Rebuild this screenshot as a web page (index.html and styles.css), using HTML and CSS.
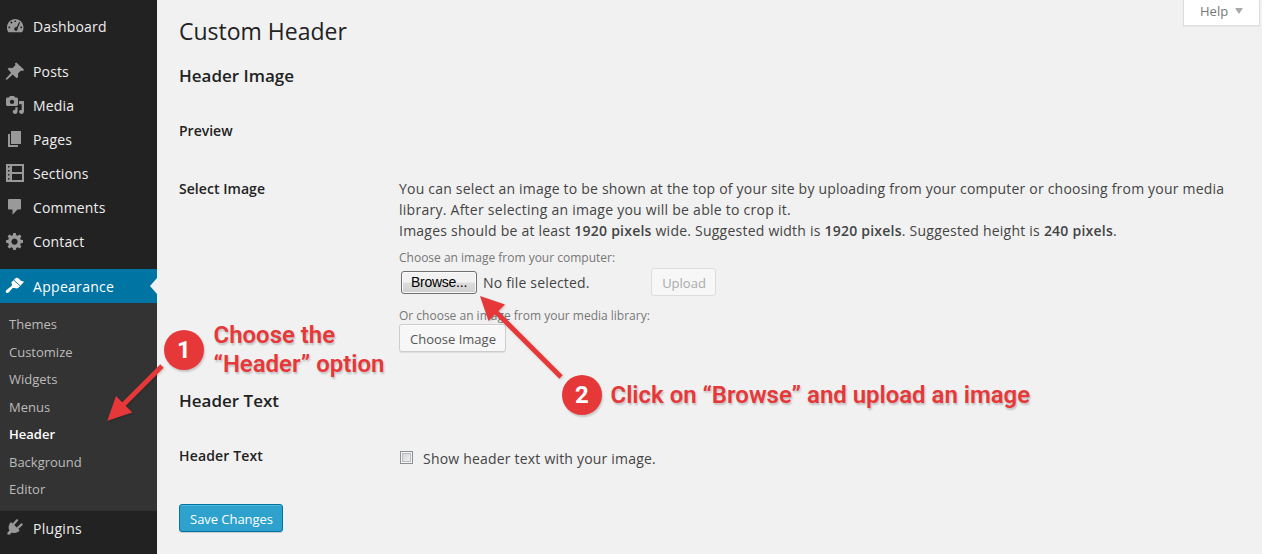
FILE: index.html
```html
<!DOCTYPE html>
<html lang="en">
<head>
<meta charset="utf-8">
<title>Custom Header</title>
<link rel="stylesheet" href="styles.css">
</head>
<body>
<div class="page">
  <nav class="sidebar">
    <a class="item"><svg class="icon" viewBox="0 0 20 20"><path fill-rule="evenodd" d="M3.500 15.300C2.400 14 2 12.500 2 10.700C2 5.900 5.600 2 10.200 2s8.300 3.900 8.300 8.700c0 1.800-.5 3.300-1.500 4.600zM9.500 3.500h1.500v1.600H9.500zM5.200 5.500l1.200-1.200 1.200 1.300-1.200 1.200zM3.500 9.600h1.600v1.600H3.500zM15.400 9.600h1.600v1.600h-1.600zM14.200 5l-2.500 5c-1.400-.1-2.500.7-2.500 1.900 0 1.100.7 1.900 1.700 1.900 1.200 0 2-.9 1.700-2.300l2.500-5.900z"/></svg><span>Dashboard</span></a>
    <a class="item after-gap"><svg class="icon" viewBox="0 0 20 20"><path d="M11.300.5l7.800 7.300-1.300 1.200-1.700-.5-3.100 3 .1 3.500-1.500 1.300-3.900-3.800L2 17.800l-1.300-.2.200-1.200 5.200-5.700-3.500-3.600L4 5.700l3.600.3 2.900-3-.7-1.400z"/></svg><span>Posts</span></a>
    <a class="item"><svg class="icon" viewBox="0 0 20 20"><path fill-rule="evenodd" d="M1 2.500l1-1h1.800L5 0h4l1.200 1.500H12l1 1V9l-1 1H2L1 9zM7 3.700a2.200 2.200 0 1 0 .01 0z"/><path d="M14 5h5v10.300c0 1.600-1 2.700-2.500 2.700-1.400 0-2.400-1-2.400-2.200 0-1.300 1-2.200 2.600-2.100V8.300H14zM10.300 11.300h2.300v4c0 1.600-1 2.700-2.500 2.700-1.400 0-2.400-1-2.400-2.200 0-1.300 1-2.200 2.600-2.100z"/></svg><span>Media</span></a>
    <a class="item"><svg class="icon" viewBox="0 0 20 20"><path d="M6 1h10v13H6zM3 4h2v11h8v2H3z"/></svg><span>Pages</span></a>
    <a class="item"><svg class="icon" viewBox="0 0 20 20"><path fill-rule="evenodd" d="M1 0h18v18H1zM7 2v6h10V2zM7 10v6h10v-6zM3 2v1.500h1.500V2zM3 6v1.500h1.500V6zM3 10v1.500h1.500V10zM3 14v1.500h1.500V14z"/></svg><span>Sections</span></a>
    <a class="item"><svg class="icon" viewBox="0 0 20 20"><path d="M4 1h11q1 0 1 1v8.500q0 1-1 1h-2.500L7.500 16.800V11.500H4q-1 0-1-1V2q0-1 1-1z"/></svg><span>Comments</span></a>
    <a class="item"><svg class="icon" viewBox="0 0 20 20"><path fill-rule="evenodd" d="M8.200 1h2.600l.4 2.200 1.500.6 2-1.300 1.700 1.700-1.200 2 .6 1.500 2.200.4v2.700l-2.200.5-.6 1.500 1.200 1.900-1.800 1.800-1.900-1.200-1.500.6-.5 2.200H8.300l-.5-2.200-1.500-.6-1.900 1.200-1.800-1.800 1.300-1.900-.7-1.500L1 10.800V8.200l2.200-.5.7-1.500-1.300-1.900 1.800-1.800 1.900 1.300 1.500-.6zM9.500 6.500a3.100 3.100 0 1 0 .01 0z"/></svg><span>Contact</span></a>
    <a class="item current"><svg class="icon" viewBox="0 0 20 20"><path d="M10.500 2.200C12.300 1.200 14 2.500 15.500 4.500l3.600 1.300-5.300 5.700-1.900 1-2.600-.6-1.700.2-3.500 3.800c-1.100 1.300-2.500 1.300-3.100.7-.6-.7-.3-1.900.8-2.900l4.700-3.600.6-1.500-.9-2.200z"/><path class="cut" d="M8.300 3.700l7.200 6.500"/></svg><span>Appearance</span></a>
    <div class="submenu">
      <a>Themes</a><a>Customize</a><a>Widgets</a><a>Menus</a><a class="selected">Header</a><a>Background</a><a>Editor</a>
    </div>
    <a class="item plugins"><svg class="icon" viewBox="0 0 20 20"><path d="M6 4l8.700 8.300c-1.800 2.500-5 3.500-7.800 2.300l-2.400 2.100-2-.1-.1-1.800 2-2.200C2.900 9.800 3.600 6.500 6 4z"/><path class="prong" d="M8.700 6l3.300-3.700M12.800 10l3.900-3.600"/></svg><span>Plugins</span></a>
  </nav>

  <main class="content">
    <header class="top">
      <h1>Custom Header</h1>
      <button class="help">Help <i class="caret"></i></button>
    </header>
    <h2>Header Image</h2>
    <div class="row preview"><h3>Preview</h3></div>
    <div class="row select">
      <h3>Select Image</h3>
      <div class="field">
        <p class="intro"><span class="line-a">You can select an image to be shown at the top of your site by uploading from your computer or choosing from your media</span><br><span class="line-b">library. After selecting an image you will be able to crop it.</span><br><span class="line-c">Images should be at least <b>1920 pixels</b> wide. Suggested width is <b>1920 pixels</b>. Suggested height is <b>240 pixels</b>.</span></p>
        <label class="hint">Choose an image from your computer:</label>
        <div class="upload-line">
          <button class="browse">Browse...</button><span class="file">No file selected.</span><button class="button disabled">Upload</button>
        </div>
        <label class="hint second">Or choose an image from your media library:</label>
        <button class="button choose">Choose Image</button>
      </div>
    </div>
    <h2 class="text-title">Header Text</h2>
    <div class="row text-row">
      <h3>Header Text</h3>
      <label class="check"><i class="box"></i><span>Show header text with your image.</span></label>
    </div>
    <button class="save">Save Changes</button>
  </main>

  <div class="notes">
    <svg class="arrows" viewBox="0 0 1262 554">
      <path class="shaft" d="M162 366L122 406M561 377L495 311"/>
      <path d="M107.300 420.700L116 396L132.300 412.500ZM480 296L505 304.500L488.500 321Z"/>
    </svg>
    <b class="badge one">1</b>
    <p class="note note-one">Choose the<br>“Header” option</p>
    <b class="badge two">2</b>
    <p class="note note-two">Click on “Browse” and upload an image</p>
  </div>
</div>
</body>
</html>
```
FILE: styles.css
```css
* { box-sizing: border-box; }
body, h1, h2, h3, p { margin: 0; }
body { background: #f1f1f1; color: #444; font: 14px/21px "Open Sans", sans-serif; }
button { font-family: inherit; padding: 0; margin: 0; }
.page { position: relative; display: flex; width: 1262px; height: 554px; overflow: hidden; }

.sidebar { width: 157px; height: 554px; padding-top: 10px; background: #222; flex: none; }
.item { display: flex; height: 34px; padding: 7px 0 0 5px; color: #eee; font-size: 14px; line-height: 20px; letter-spacing: .15px; }
.item span { margin-left: 8px; }
.after-gap { margin-top: 11px; }
.icon { width: 20px; height: 20px; fill: #999; flex: none; }
.current { position: relative; margin-top: 10px; background: #0074a2; color: #fff; letter-spacing: .3px; }
.current span { padding-top: 1px; }
.current .icon { fill: #fff; }
.current::after { content: ""; position: absolute; right: 0; top: 9px; border: 8px solid transparent; border-left: 0; border-right: 7px solid #f1f1f1; }
.plugins { letter-spacing: .3px; }
.plugins span { padding-top: 1px; }
.cut { stroke: #0074a2; stroke-width: .9; fill: none; }
.prong { stroke: #999; stroke-width: 2.200; stroke-linecap: round; }
.submenu { display: flex; flex-direction: column; height: 208px; padding: 8px 0 0 9px; background: #333; color: #bbb; font-size: 13px; }
.submenu a { height: 27.500px; line-height: 27.500px; }
.submenu .selected { color: #fff; font-weight: 600; }

.content { flex: 1; padding-left: 22px; }
.top { display: flex; justify-content: space-between; height: 62px; padding-right: 2px; }
h1 { padding-top: 17px; color: #222; font-size: 23px; font-weight: 400; line-height: 29px; }
.help { width: 77px; height: 26px; padding: 0 0 3px 16px; display: flex; align-items: center; border: 1px solid #ddd; border-top: 0; background: #fff; color: #777; font-size: 13px; line-height: 22px; box-shadow: 0 1px 1px rgba(0,0,0,.04); }
.caret { margin: -1px 0 0 7px; border: 4px solid transparent; border-top: 6px solid #aaa; border-bottom: 0; }
h2 { height: 28px; color: #222; font-size: 17px; font-weight: 600; line-height: 28px; }
h3 { width: 220px; color: #222; font-size: 14px; font-weight: 600; line-height: 20px; flex: none; }
.row { display: flex; }
.preview { height: 88px; padding-top: 31px; }
.select { height: 209px; }
.select h3 { padding-top: 1px; letter-spacing: .05px; }
.field { display: flex; flex-direction: column; align-items: flex-start; }
.intro { height: 70px; white-space: nowrap; }
.line-a { letter-spacing: .2px; }
.line-b { letter-spacing: .26px; }
.line-c { letter-spacing: .23px; }
b { font-weight: 600; }
.hint { height: 20px; padding-top: 1px; color: #777; font-size: 12px; line-height: 18px; }
.upload-line { display: flex; align-items: center; height: 28px; }
.browse { width: 76px; height: 23px; margin-left: 2px; border: 1px solid #707070; border-radius: 3px; background: linear-gradient(#f2f2f2 0 48%, #dedede 52%, #cfcfcf); box-shadow: inset 0 0 0 1px #fafafa; color: #000; font: 14px "Liberation Sans", sans-serif; letter-spacing: -.25px; }
.file { width: 168px; margin-left: 6px; letter-spacing: .18px; }
.button { border: 1px solid #ccc; border-radius: 3px; background: #f7f7f7; color: #555; font-size: 13px; height: 28px; padding: 1px 0 0 1px; box-shadow: inset 0 1px 0 #fff, 0 1px 0 rgba(0,0,0,.08); }
.button.disabled { width: 65px; padding-top: 2px; color: #aaa; border-color: #ddd; box-shadow: none; }
.second { height: 18px; margin-top: 10px; }
.choose { width: 107px; }
.text-row { padding-top: 31px; height: 89px; }
.text-row h3 { letter-spacing: .15px; }
.check { display: flex; padding-top: 2px; letter-spacing: .2px; }
.box { width: 13px; height: 13px; margin: 3px 10px 0 1px; border: 1px solid #8e8f8f; background: linear-gradient(135deg, #cbcfd5, #f6f6f6); box-shadow: inset 0 0 0 1px #f4f4f4, inset 0 0 0 2px #b9bdc2; }
.save { display: block; width: 104px; height: 28px; padding: 2px 0 0 1px; border: 1px solid #0074a2; border-radius: 3px; background: #2ea2cc; color: #fff; font-size: 13px; letter-spacing: -.05px; box-shadow: inset 0 1px 0 rgba(120,200,230,.5), 0 1px 0 rgba(0,0,0,.15); }

.notes { position: absolute; inset: 0; pointer-events: none; color: #e73839; font-family: Roboto, sans-serif; }
.arrows { position: absolute; left: 0; top: 0; width: 1262px; height: 554px; fill: #e73839; filter: drop-shadow(1px 1px 1px rgba(0,0,0,.18)); }
.shaft { stroke: #e73839; stroke-width: 4.800; fill: none; }
.badge { position: absolute; width: 40px; height: 40px; border-radius: 50%; background: #e73839; color: #fff; font-size: 24px; font-weight: 700; line-height: 41px; text-align: center; box-shadow: 1px 2px 2px rgba(0,0,0,.18); }
.one { left: 164px; top: 330px; }
.two { left: 562px; top: 375px; }
.note { position: absolute; font-size: 24px; font-weight: 600; line-height: 29px; letter-spacing: -.03px; white-space: nowrap; text-shadow: 1px 2px 2px rgba(0,0,0,.2); }
.note-one { left: 213.500px; top: 321px; }
.note-two { left: 610.500px; top: 381px; }
```
